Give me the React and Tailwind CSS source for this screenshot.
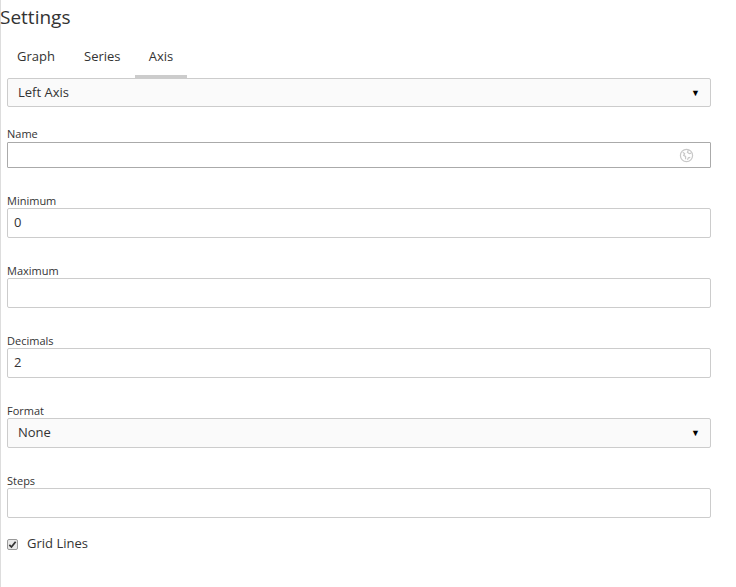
export default function App() {
  const f = { fontFamily: '"Open Sans", "Noto Sans", sans-serif' };
  return (
    <div style={f} className="w-[736px] h-[587px] bg-white border-l border-[#ddd] text-[#333] relative">
      <div className="pr-[25px]">
        <div className="text-[19px] leading-[26px] pt-[4px] text-[#333] -ml-[1px]">Settings</div>
        <div className="flex pl-[6px] mt-[15px] text-[13px] text-[#333]">
          <div className="w-[62px] pl-[10px] h-[33px] pt-[2px]">Graph</div>
          <div className="w-[66px] pl-[15px] h-[33px] pt-[2px]">Series</div>
          <div className="w-[52px] text-center h-[33px] pt-[2px] border-b-[3px] border-[#ccc]">Axis</div>
        </div>
        <div className="pl-[6px]">
          <div className="h-[29px] border border-[#ccc] rounded-[2px] bg-[#fafafa] flex items-center justify-between pl-[10px] pr-[10px] text-[13px]">
            <span>Left Axis</span><span className="text-[9px] text-black">▼</span>
          </div>
          <div className="text-[11px] h-[14px] leading-[14px] mt-[20px]">Name</div>
          <div className="mt-[1px] h-[26px] border border-[#aaa] rounded-[1px] flex items-center justify-end pr-[16px]">
            <svg width="15" height="15" viewBox="0 0 16 16" fill="none" stroke="#c8c8c8" strokeWidth="1.3">
              <circle cx="8" cy="8" r="6.5" />
              <path d="M4 4.5l2 1.5-1 2 2 1v3M10 2.5l-1 2 2 1.5 2-.5M12 10l-2 .5-1 2" />
            </svg>
          </div>
          {[["Minimum", "0"], ["Maximum", ""], ["Decimals", "2"]].map(([l, v]) => (
            <div key={l}>
              <div className="text-[11px] h-[14px] leading-[14px] mt-[26px]">{l}</div>
              <div className="h-[30px] border border-[#ccc] rounded-[2px] flex items-center px-[6px] text-[13px]">{v}</div>
            </div>
          ))}
          <div className="text-[11px] h-[14px] leading-[14px] mt-[26px]">Format</div>
          <div className="h-[30px] border border-[#ccc] rounded-[2px] bg-[#fafafa] flex items-center justify-between pl-[10px] pr-[10px] text-[13px]">
            <span>None</span><span className="text-[9px] text-black">▼</span>
          </div>
          <div className="text-[11px] h-[14px] leading-[14px] mt-[26px]">Steps</div>
          <div className="h-[30px] border border-[#ccc] rounded-[2px]"></div>
          <div className="flex items-center mt-[17px] h-[18px] text-[13px]">
            <div className="w-[11px] h-[11px] border border-[#999] rounded-[2px] bg-[#e8e8e8] flex items-center justify-center">
              <svg width="9" height="9" viewBox="0 0 10 10"><path d="M1.5 5.5l2.3 2.3L8.5 2" stroke="#333" strokeWidth="2" fill="none" /></svg>
            </div>
            <span className="ml-[9px]">Grid Lines</span>
          </div>
        </div>
      </div>
    </div>
  );
}
